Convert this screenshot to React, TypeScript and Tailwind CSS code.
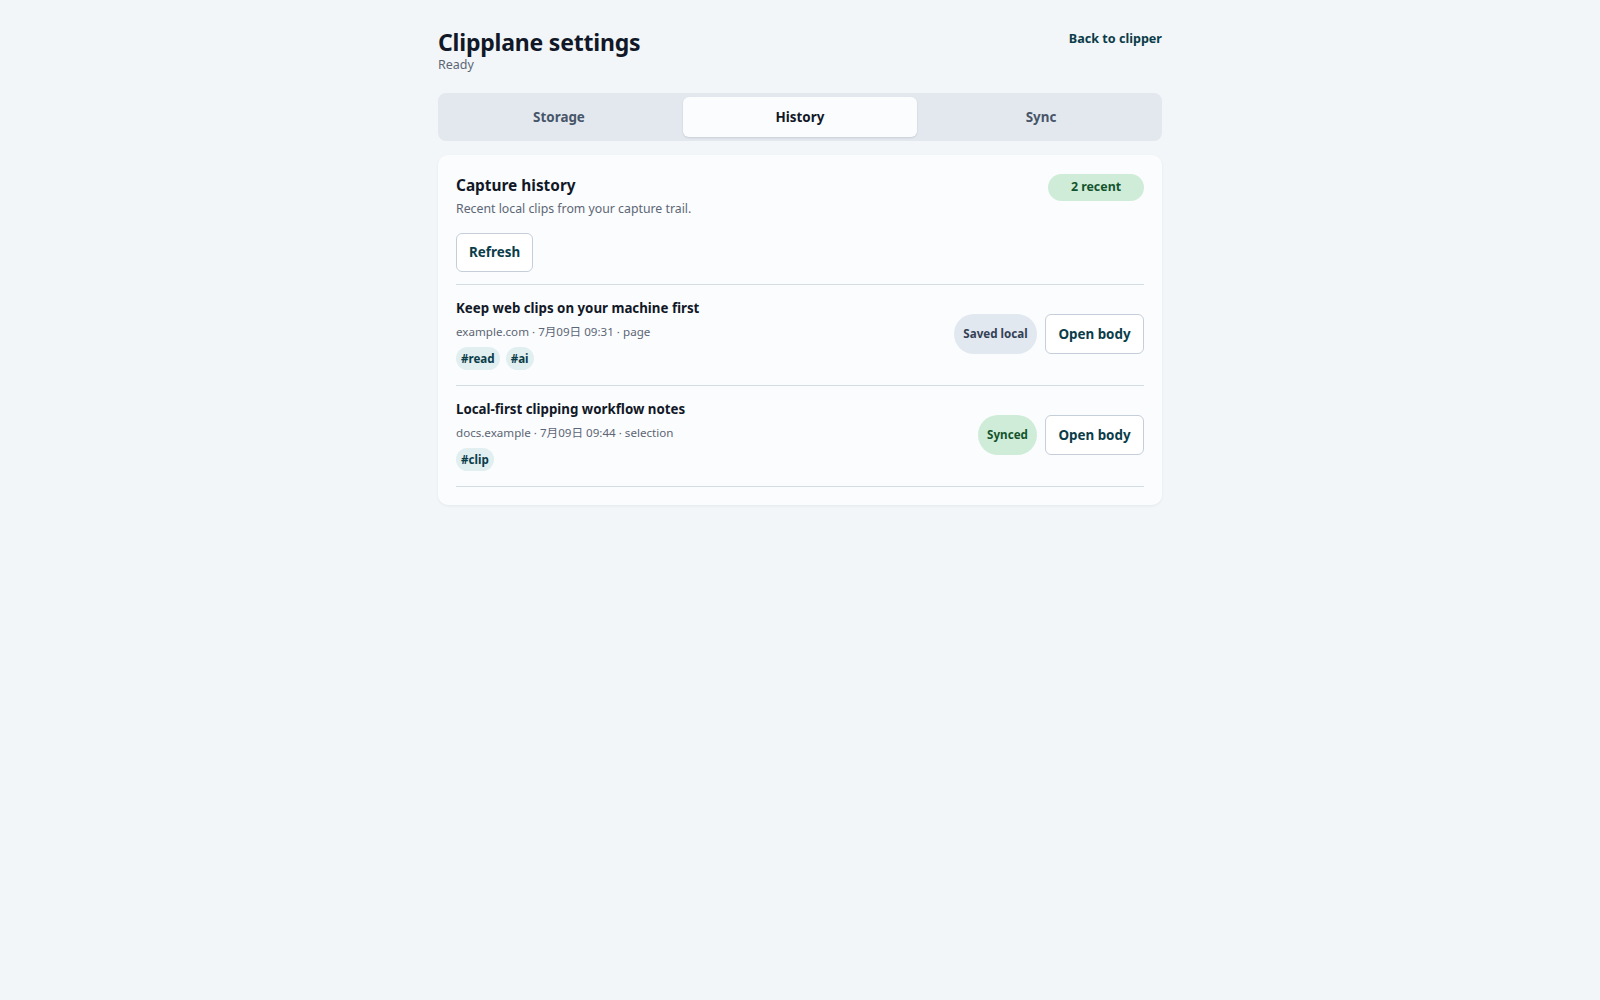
import { useState } from "react";

type Clip = {
  title: string;
  source: string;
  when: string;
  kind: string;
  tags: string[];
  status: "local" | "synced";
};

const clips: Clip[] = [
  {
    title: "Keep web clips on your machine first",
    source: "example.com",
    when: "7月09日 09:31",
    kind: "page",
    tags: ["#read", "#ai"],
    status: "local",
  },
  {
    title: "Local-first clipping workflow notes",
    source: "docs.example",
    when: "7月09日 09:44",
    kind: "selection",
    tags: ["#clip"],
    status: "synced",
  },
];

const tabs = ["Storage", "History", "Sync"];

export default function App() {
  const [tab, setTab] = useState("History");

  return (
    <div
      className="min-h-screen bg-[#f3f6f8] text-[#111827]"
      style={{ fontFamily: '"Noto Sans", "Noto Sans CJK SC", sans-serif' }}
    >
      <div className="mx-auto w-[724px] pt-[28px]">
        <header className="mb-[19px] flex items-start justify-between">
          <div>
            <h1 className="text-[23px] font-bold leading-[28px] tracking-[-0.2px]">
              Clipplane settings
            </h1>
            <p className="text-[12.5px] leading-[18px] text-[#5b6676]">Ready</p>
          </div>
          <button
            type="button"
            className="mt-[1px] text-[12.6px] font-bold leading-[20px] text-[#0b3c49]"
          >
            Back to clipper
          </button>
        </header>

        <nav className="grid grid-cols-3 gap-[7px] rounded-[8px] bg-[#e3e8ee] p-1">
          {tabs.map((t) => (
            <button
              key={t}
              type="button"
              onClick={() => setTab(t)}
              className={`h-[40px] rounded-[6px] text-[13.4px] font-bold ${
                tab === t
                  ? "bg-[#fbfcfd] text-[#111827] shadow-[0_1px_2px_rgba(15,23,42,0.12)]"
                  : "text-[#475569]"
              }`}
            >
              {t}
            </button>
          ))}
        </nav>

        <section className="mt-[14px] rounded-[10px] bg-[#fbfcfd] px-[18px] pb-[18px] pt-[19px] shadow-[0_1px_3px_rgba(15,23,42,0.06)]">
          <div className="flex items-start justify-between">
            <div>
              <h2 className="text-[15.4px] font-bold leading-[24px]">
                Capture history
              </h2>
              <p className="mt-[2px] text-[12.3px] leading-[18px] text-[#5b6676]">
                Recent local clips from your capture trail.
              </p>
            </div>
            <span className="flex h-[27px] w-[96px] items-center justify-center rounded-full bg-[#cfecd8] text-[12.4px] font-bold text-[#14532d]">
              2 recent
            </span>
          </div>

          <button
            type="button"
            className="mt-[15px] h-[39px] rounded-[6px] border border-[#c5ced9] bg-white px-[12px] text-[13.4px] font-bold text-[#0b3c49]"
          >
            Refresh
          </button>

          <ul className="mt-[12px] border-t border-[#d3dbe3]">
            {clips.map((clip) => (
              <li
                key={clip.title}
                className="flex items-center justify-between border-b border-[#d3dbe3] pb-[15px] pt-[13px]"
              >
                <div className="flex flex-col gap-[5px]">
                  <h3 className="text-[13.3px] font-bold leading-[20px]">
                    {clip.title}
                  </h3>
                  <p className="text-[11.6px] leading-[18px] text-[#5b6676]">
                    {clip.source} · {clip.when} · {clip.kind}
                  </p>
                  <div className="mt-[1px] flex gap-[6px]">
                    {clip.tags.map((tag) => (
                      <span
                        key={tag}
                        className="flex h-[23px] items-center rounded-full bg-[#e1eff0] px-[5px] text-[11.6px] font-bold text-[#0b3c49]"
                      >
                        {tag}
                      </span>
                    ))}
                  </div>
                </div>
                <div className="flex items-stretch gap-[8px]">
                  {clip.status === "local" ? (
                    <span className="flex w-[83px] items-center justify-center rounded-full bg-[#e2e8f0] text-[11.6px] font-bold text-[#334155]">
                      Saved local
                    </span>
                  ) : (
                    <span className="flex w-[59px] items-center justify-center rounded-full bg-[#cfecd8] text-[11.6px] font-bold text-[#14532d]">
                      Synced
                    </span>
                  )}
                  <button
                    type="button"
                    className="h-[40px] w-[99px] rounded-[6px] border border-[#c5ced9] bg-white text-[13.4px] font-bold text-[#0b3c49]"
                  >
                    Open body
                  </button>
                </div>
              </li>
            ))}
          </ul>
        </section>
      </div>
    </div>
  );
}
